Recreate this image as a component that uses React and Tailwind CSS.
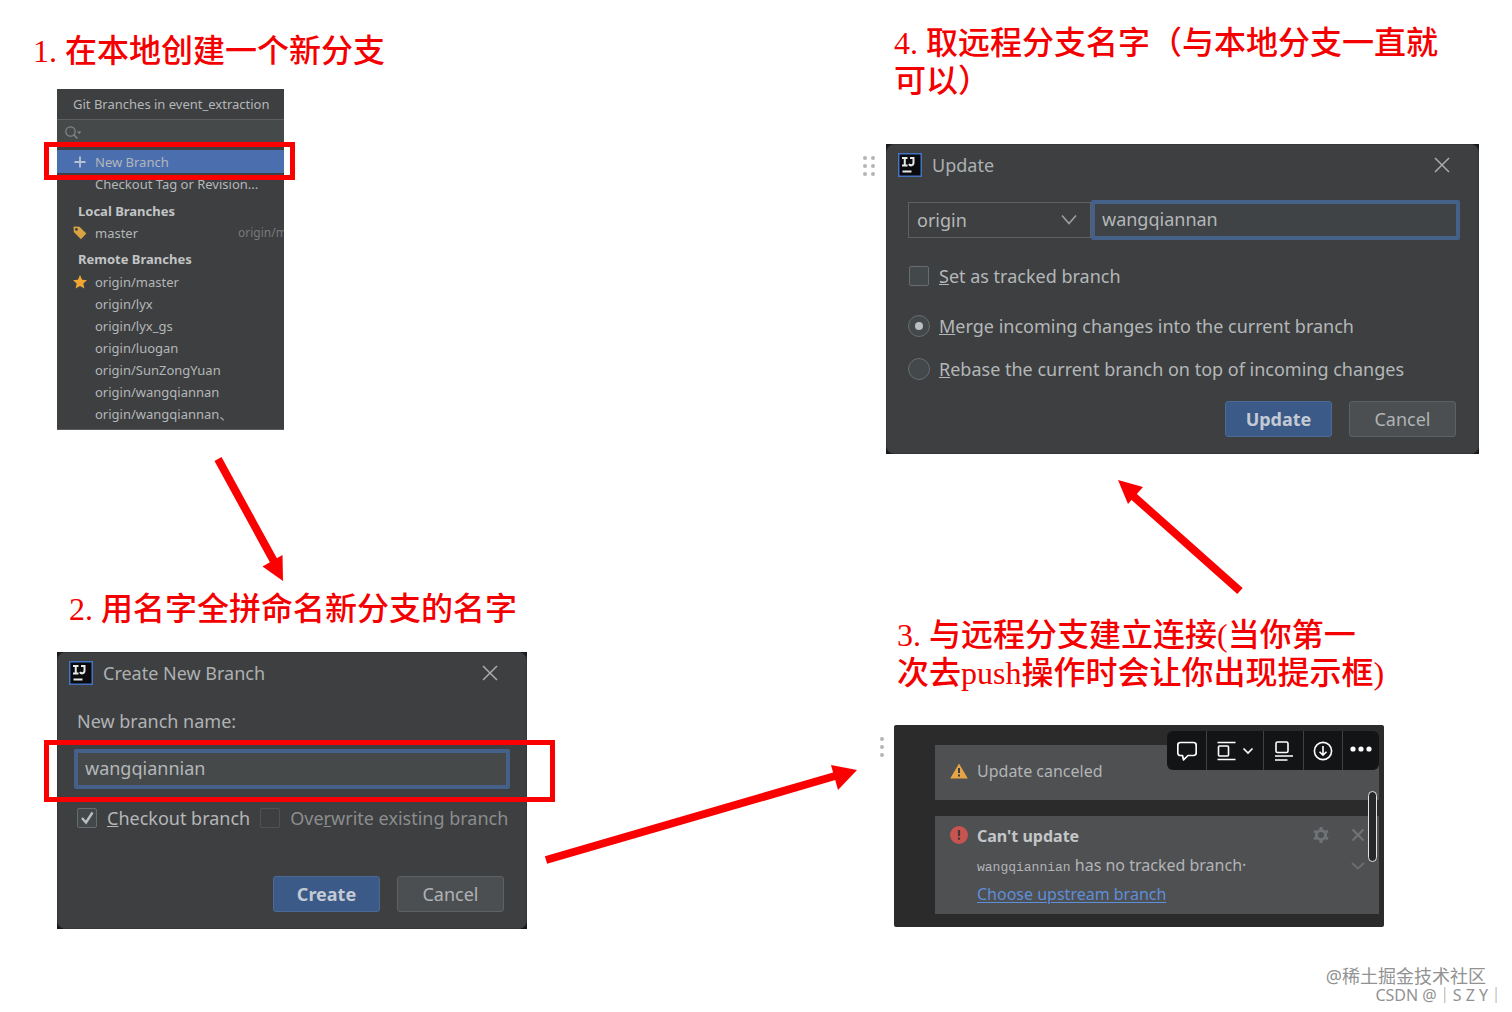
const REMOTES = [
  "origin/master",
  "origin/lyx",
  "origin/lyx_gs",
  "origin/luogan",
  "origin/SunZongYuan",
  "origin/wangqiannan",
  "origin/wangqiannan、",
];

function Heading({ number, className = "", children }) {
  return (
    <h2
      className={
        "whitespace-nowrap font-['Liberation_Serif','Noto_Sans_CJK_SC',serif] text-[32px] leading-[38px] font-medium text-[#f50000] " +
        className
      }
    >
      <span className="inline-block w-8">{number}.</span>
      {children}
    </h2>
  );
}

function Highlight({ className }) {
  return <div className={"pointer-events-none absolute z-10 border-[5px] border-[#fa0000] " + className} />;
}

function IdeaLogo() {
  return (
    <svg className="size-6 shrink-0" viewBox="0 0 24 24" fill="none" aria-hidden="true">
      <rect x="0.75" y="0.75" width="22.5" height="22.5" fill="#0b0b0d" stroke="#4473c4" strokeWidth="1.5" />
      <path d="M4 5h5.500M4 12.500h5.500M6.750 5v7.500M12 5h4.500M15.500 5v4.500c0 3.500-3.500 3.500-4.500 1.500" stroke="#e8e8e8" strokeWidth="2" />
      <path d="M4.500 18.500h9" stroke="#e8e8e8" strokeWidth="2" />
    </svg>
  );
}

function TitleBar({ title }) {
  return (
    <header className="flex items-center pt-2 pr-6 pl-[11px]">
      <IdeaLogo />
      <h3 className="ml-2.5 flex-1 text-lg leading-6 text-[#adb0b2]">{title}</h3>
      <button type="button" aria-label="Close" className="flex size-6 items-center justify-center">
        <svg className="size-4" viewBox="0 0 16 16" stroke="#a9abad" strokeWidth="1.5" aria-hidden="true">
          <path d="M1 1l14 14M15 1L1 15" />
        </svg>
      </button>
    </header>
  );
}

function Dialog({ className, children }) {
  return (
    <div className={"bg-[#17191a] " + className}>
      <section className="rounded-lg border border-[#35383a] bg-[#3d3f40]">{children}</section>
    </div>
  );
}

function TextField({ label, value, className }) {
  return (
    <input
      aria-label={label}
      defaultValue={value}
      className={
        "h-10 min-w-0 rounded-xs border-4 border-[#45618a] px-[7px] pb-0.5 text-lg leading-6 text-[#b4b7b9] outline-none " +
        className
      }
    />
  );
}

function Check({ id, checked, disabled, children }) {
  return (
    <div className="flex items-center">
      <span className="relative flex size-5">
        <input
          id={id}
          type="checkbox"
          defaultChecked={checked}
          disabled={disabled}
          className={
            "size-5 appearance-none rounded-xs border " +
            (disabled ? "border-[#505355]" : "border-[#696c6e] bg-[#43494a]")
          }
        />
        {checked && (
          <svg className="pointer-events-none absolute inset-0 size-5" viewBox="0 0 20 20" fill="none" aria-hidden="true">
            <path d="M5 10l4 4.5L15.5 4.5" stroke="#bcbec0" strokeWidth="2.4" />
          </svg>
        )}
      </span>
      <label
        htmlFor={id}
        className={"ml-2.5 whitespace-nowrap text-lg leading-6 " + (disabled ? "text-[#8b8d8f]" : "text-[#b4b7b9]")}
      >
        {children}
      </label>
    </div>
  );
}

function Radio({ id, checked, children }) {
  return (
    <div className="flex h-6 items-center">
      <input
        id={id}
        type="radio"
        name="strategy"
        defaultChecked={checked}
        className="flex size-[22px] shrink-0 appearance-none items-center justify-center rounded-full border border-[#686c6e] bg-[#43494a] checked:before:size-2 checked:before:rounded-full checked:before:bg-[#bcbec0]"
      />
      <label htmlFor={id} className="ml-[9px] whitespace-nowrap text-lg leading-6 text-[#b4b7b9]">
        {children}
      </label>
    </div>
  );
}

function Actions({ primary, className }) {
  const base = "h-9 w-[107px] rounded-[3px] border text-lg leading-6 ";
  return (
    <footer className={"flex justify-end gap-[17px] pr-[22px] " + className}>
      <button type="button" className={base + "border-[#4c6a96] bg-[#3c5a87] font-bold text-[#c3cad4]"}>
        {primary}
      </button>
      <button type="button" className={base + "border-[#5e6163] bg-[#4c4f51] text-[#b0b3b5]"}>
        Cancel
      </button>
    </footer>
  );
}

function BranchRow({ icon, children, extra }) {
  return (
    <li className="flex h-[22px] items-center overflow-hidden pl-4">
      <span className="flex w-[22px] shrink-0">{icon}</span>
      <span className="whitespace-nowrap">{children}</span>
      {extra}
    </li>
  );
}

function BranchesPopup() {
  return (
    <section className="w-[227px] border-b border-[#5b5e60] bg-[#3d3f40] pb-1 text-[13px] leading-[22px] text-[#b4b7b9]">
      <h3 className="h-[30px] whitespace-nowrap pl-4 leading-[30px]">Git Branches in event_extraction</h3>
      <label className="flex h-[26px] items-center border-t border-[#5c6062] bg-[#45494a] pl-2">
        <svg className="size-4 shrink-0" viewBox="0 0 16 16" fill="none" stroke="#85888a" aria-hidden="true">
          <circle cx="5.5" cy="6.5" r="4.7" strokeWidth="1.2" />
          <path d="M9 10l3.4 3.6" strokeWidth="1.4" />
          <path d="M12 6.5h4.5l-2.2 2.6z" fill="#85888a" stroke="none" />
        </svg>
        <input aria-label="Search branches" className="w-full min-w-0 bg-transparent outline-none" />
      </label>
      <div className="relative mt-[5px]">
        <button type="button" className="flex h-[23px] w-full items-center bg-[#4b6eaf] pl-4">
          <svg className="size-3.5" viewBox="0 0 14 14" stroke="#b9c2d2" strokeWidth="1.8" aria-hidden="true">
            <path d="M7 1.5v11M1.5 7h11" />
          </svg>
          <span className="ml-2">New Branch</span>
        </button>
        <Highlight className="-top-2 -right-[11px] -bottom-[7px] -left-[13px]" />
      </div>
      <button type="button" className="block h-[22px] pl-[38px]">
        Checkout Tag or Revision...
      </button>
      <h4 className="mt-[5px] pl-[21px] font-bold text-[#c2c4c6]">Local Branches</h4>
      <ul>
        <BranchRow
          icon={
            <svg className="size-3.5" viewBox="0 0 14 14" aria-hidden="true">
              <path d="M.5 1.5Q.5.5 1.500.5L6.500.8 13.300 7.500 8 13.300.8 6z" fill="#d9a343" />
              <circle cx="3.400" cy="3.400" r="1.400" fill="#3d3f40" />
            </svg>
          }
          extra={<span className="ml-auto w-[46px] shrink-0 whitespace-nowrap text-xs text-[#77797b]">origin/m</span>}
        >
          master
        </BranchRow>
      </ul>
      <h4 className="mt-1 pl-[21px] font-bold text-[#c2c4c6]">Remote Branches</h4>
      <ul className="mt-px">
        {REMOTES.map((name, i) => (
          <BranchRow
            key={name}
            icon={
              i === 0 && (
                <svg className="size-3.5" viewBox="0 0 14 14" fill="#f0a732" aria-hidden="true">
                  <path d="M7 0l2.100 4.700 4.900.5-3.700 3.400 1.100 5L7 11.100l-4.400 2.500 1.100-5L0 5.200l4.900-.5z" />
                </svg>
              )
            }
          >
            {name}
          </BranchRow>
        ))}
      </ul>
    </section>
  );
}

function DragDots({ columns, className }) {
  return (
    <div className={"flex shrink-0 gap-1 " + className} aria-hidden="true">
      {Array.from({ length: columns }, (_, c) => (
        <div key={c} className="flex flex-col gap-1">
          <i className="size-1 rounded-full bg-[#b3b5b8]" />
          <i className="size-1 rounded-full bg-[#b3b5b8]" />
          <i className="size-1 rounded-full bg-[#b3b5b8]" />
        </div>
      ))}
    </div>
  );
}

function ImageToolbar() {
  const button = "flex items-center justify-center ";
  return (
    <div className="absolute top-1.5 right-[5px] flex h-[39px] divide-x divide-[#3f4142] rounded-md bg-[#131415] text-white">
      <button type="button" aria-label="Comment" className={button + "w-10"}>
        <svg className="size-5" viewBox="0 0 20 20" fill="none" stroke="currentColor" strokeWidth="1.7" strokeLinejoin="round" aria-hidden="true">
          <path d="M3.500 1.500h13Q19.200 1.500 19.200 4.200v7.600Q19.200 14.500 16.500 14.500H11L6.500 18.800 5.500 14.500H3.500Q.8 14.500.8 11.800V4.200Q.8 1.500 3.500 1.500z" />
        </svg>
      </button>
      <button type="button" aria-label="Alignment" className={button + "w-[57px] gap-1.5"}>
        <svg className="h-5 w-[19px]" viewBox="0 0 19 20" fill="none" stroke="currentColor" strokeWidth="1.6" aria-hidden="true">
          <path d="M.5 1.500h18M.5 18.500h18" />
          <rect x="1.500" y="5" width="10" height="10" rx="1" />
        </svg>
        <svg className="h-2 w-3" viewBox="0 0 12 8" fill="none" stroke="currentColor" strokeWidth="1.7" aria-hidden="true">
          <path d="M1.500 1.500L6 6l4.500-4.500" />
        </svg>
      </button>
      <button type="button" aria-label="Caption" className={button + "w-10"}>
        <svg className="size-5" viewBox="0 0 20 20" fill="none" stroke="currentColor" strokeWidth="1.6" aria-hidden="true">
          <rect x="2" y="1" width="12" height="10.500" rx="1.500" />
          <path d="M1 15h18M1 19h12.500" />
        </svg>
      </button>
      <button type="button" aria-label="Download" className={button + "w-[39px]"}>
        <svg className="size-5" viewBox="0 0 20 20" fill="none" stroke="currentColor" strokeWidth="1.6" aria-hidden="true">
          <circle cx="10" cy="10" r="8.600" />
          <path d="M10 5v9M6.500 10.700L10 14.200l3.500-3.500" />
        </svg>
      </button>
      <button type="button" aria-label="More" className={button + "w-9 pb-1"}>
        <svg className="h-1.5 w-[22px]" viewBox="0 0 22 6" fill="currentColor" aria-hidden="true">
          <circle cx="3" cy="3" r="2.600" />
          <circle cx="11" cy="3" r="2.600" />
          <circle cx="19" cy="3" r="2.600" />
        </svg>
      </button>
    </div>
  );
}

function Notifications() {
  return (
    <section className="relative w-full max-w-[490px] rounded-xs bg-[#2b2b2b] pt-5 pr-[5px] pb-[13px] pl-[41px] text-base leading-6 text-[#b2b4b6]">
      <div className="flex h-[55px] items-center bg-[#4e5052] pb-1 pl-[15px]">
        <svg className="h-4 w-[18px]" viewBox="0 0 18 16" aria-hidden="true">
          <path d="M9 .5L17.800 15.500H.2z" fill="#e5a445" />
          <path d="M9 5v5M9 11.500v2" stroke="#3c3f41" strokeWidth="2" />
        </svg>
        <p className="ml-[9px]">Update canceled</p>
      </div>
      <div className="mt-4 flex bg-[#4e5052] py-2 pl-[15px]">
        <svg className="mt-0.5 size-[18px]" viewBox="0 0 18 18" aria-hidden="true">
          <circle cx="9" cy="9" r="9" fill="#c75450" />
          <path d="M9 4v6M9 11.500v2.300" stroke="#4b3435" strokeWidth="2.200" />
        </svg>
        <div className="ml-[9px] flex flex-1 flex-col gap-[5px]">
          <h4 className="font-bold text-[#c4c6c8]">Can't update</h4>
          <p className="h-6">
            <code className="font-['Liberation_Mono',monospace] text-[13px] leading-none">wangqiannian</code> has no
            tracked branch·
          </p>
          <a href="#upstream" className="self-start text-[#5f8ed8] underline underline-offset-2">
            Choose upstream branch
          </a>
        </div>
        <svg className="mt-0.5 mr-[21px] size-[18px]" viewBox="0 0 18 18" fill="none" stroke="#6f7274" aria-hidden="true">
          <circle cx="9" cy="9" r="4.600" strokeWidth="3" />
          <path
            d="M9 1v3M9 14v3M2.070 5l2.600 1.500M13.330 11.500l2.600 1.500M2.070 13l2.600-1.500M13.330 6.500l2.600-1.500"
            strokeWidth="3"
          />
        </svg>
        <div className="mr-3.5 flex flex-col items-center gap-5 pt-1">
          <svg className="size-3.5" viewBox="0 0 14 14" stroke="#707375" strokeWidth="2.200" aria-hidden="true">
            <path d="M1.500 1.500l11 11M12.500 1.500l-11 11" />
          </svg>
          <svg className="h-2 w-3.5" viewBox="0 0 14 8" fill="none" stroke="#6b6e70" strokeWidth="2" aria-hidden="true">
            <path d="M1 1l6 5.500L13 1" />
          </svg>
        </div>
      </div>
      <div className="absolute top-[66px] right-[7px] h-[71px] w-[9px] rounded-full border border-[#e2e3e4] bg-[#26282a]" />
      <ImageToolbar />
    </section>
  );
}

export default function App() {
  return (
    <main className="relative grid min-h-screen grid-cols-[527fr_330fr_655fr] bg-white font-['Noto_Sans','Noto_Sans_CJK_SC',sans-serif]">
      <div className="flex flex-col pt-8 pl-[57px]">
        <Heading number="1" className="-ml-6">
          在本地创建一个新分支
        </Heading>
        <div className="mt-[19px]">
          <BranchesPopup />
        </div>
        <svg className="mt-[27px] ml-[150px] h-[126px] w-20" viewBox="0 0 80 126" aria-hidden="true">
          <path d="M11 2L69 108" stroke="#fa0000" strokeWidth="8" />
          <path d="M76 124L55.500 109.500 75.500 98z" fill="#fa0000" />
        </svg>
        <Heading number="2" className="mt-[7px] ml-3">
          用名字全拼命名新分支的名字
        </Heading>
        <Dialog className="mt-6">
          <TitleBar title="Create New Branch" />
          <div className="px-4">
            <p className="mt-6 pl-[3px] text-lg leading-6 text-[#b0b3b5]">New branch name:</p>
            <div className="relative mt-4 flex">
              <TextField label="New branch name" value="wangqiannian" className="flex-1 bg-[#45494a]" />
              <Highlight className="-top-[9px] -right-[45px] -bottom-[13px] -left-[30px]" />
            </div>
            <div className="mt-[17px] flex gap-2.5 pl-[3px]">
              <Check id="checkout" checked>
                <u>C</u>heckout branch
              </Check>
              <Check id="overwrite" disabled>
                Ove<u>r</u>write existing branch
              </Check>
            </div>
          </div>
          <Actions primary="Create" className="mt-[46px] pb-4" />
        </Dialog>
      </div>

      <div className="flex items-end pb-[140px]">
        <svg className="w-full" viewBox="0 0 330 110" aria-hidden="true">
          <path d="M19 98L308 14" stroke="#fa0000" strokeWidth="8" />
          <path d="M330 8L304 3 311 28z" fill="#fa0000" />
        </svg>
      </div>

      <div className="flex flex-col pt-6 pr-[33px]">
        <Heading number="4" className="pl-[37px]">
          取远程分支名字（与本地分支一直就
          <br />
          可以）
        </Heading>
        <div className="mt-11 flex items-start">
          <DragDots columns={2} className="mr-[11px] ml-1.5 pt-3" />
          <Dialog className="flex-1">
            <TitleBar title="Update" />
            <div className="mt-[23px] flex items-center pr-[18px] pl-[21px]">
              <div className="relative w-[183px]">
                <select
                  aria-label="Remote"
                  className="block h-9 w-full appearance-none border border-[#5e6163] bg-transparent pl-2 text-lg leading-6 text-[#b4b7b9]"
                >
                  <option>origin</option>
                </select>
                <svg
                  className="pointer-events-none absolute top-3 right-3.5 h-3 w-4"
                  viewBox="0 0 16 12"
                  fill="none"
                  stroke="#9da0a2"
                  strokeWidth="1.600"
                  aria-hidden="true"
                >
                  <path d="M1 1.500l7 8 7-8" />
                </svg>
              </div>
              <TextField label="Branch" value="wangqiannan" className="flex-1 bg-[#3f4345]" />
            </div>
            <div className="mt-6 pl-[22px]">
              <Check id="tracked">
                <u>S</u>et as tracked branch
              </Check>
            </div>
            <div className="mt-[26px] flex flex-col gap-[19px] pl-[21px]">
              <Radio id="merge" checked>
                <u>M</u>erge incoming changes into the current branch
              </Radio>
              <Radio id="rebase">
                <u>R</u>ebase the current branch on top of incoming changes
              </Radio>
            </div>
            <Actions primary="Update" className="mt-5 pb-4" />
          </Dialog>
        </div>
        <svg className="mt-6 ml-[255px] h-[118px] w-[134px]" viewBox="0 0 134 118" aria-hidden="true">
          <path d="M128 113L20 17" stroke="#fa0000" strokeWidth="8" />
          <path d="M6 2L31 9 16 26z" fill="#fa0000" />
        </svg>
        <Heading number="3" className="mt-5 pl-10">
          与远程分支建立连接(当你第一
          <br />
          次去push操作时会让你出现提示框)
        </Heading>
        <div className="mt-[33px] flex items-start">
          <DragDots columns={1} className="mr-2.5 ml-[23px] pt-3" />
          <Notifications />
        </div>
      </div>

      <footer className="absolute right-2 bottom-2 flex flex-col items-end text-[#929292]">
        <p className="mr-[18px] text-lg leading-5">@稀土掘金技术社区</p>
        <p className="text-base leading-[18px]">CSDN @｜S Z Y｜</p>
      </footer>
    </main>
  );
}
